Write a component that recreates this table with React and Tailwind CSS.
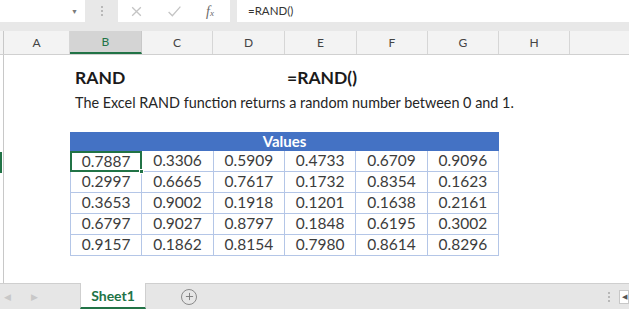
import React from 'react';
import { Plus } from 'lucide-react';

const cols = [
  { name: 'A', w: 'w-[66px]' },
  { name: 'B', w: 'w-[72px]', active: true },
  { name: 'C', w: 'w-[71px]' },
  { name: 'D', w: 'w-[72px]' },
  { name: 'E', w: 'w-[72px]' },
  { name: 'F', w: 'w-[71px]' },
  { name: 'G', w: 'w-[71px]' },
  { name: 'H', w: 'w-[71px]' },
];

const values = [
  ['0.7887', '0.3306', '0.5909', '0.4733', '0.6709', '0.9096'],
  ['0.2997', '0.6665', '0.7617', '0.1732', '0.8354', '0.1623'],
  ['0.3653', '0.9002', '0.1918', '0.1201', '0.1638', '0.2161'],
  ['0.6797', '0.9027', '0.8797', '0.1848', '0.6195', '0.3002'],
  ['0.9157', '0.1862', '0.8154', '0.7980', '0.8614', '0.8296'],
];

const App = () => {
  return (
    <div className="w-[629px] h-[309px] overflow-hidden bg-white flex flex-col font-['Lato','Liberation_Sans',sans-serif]">
      {/* formula bar */}
      <div className="h-[22px] flex bg-[#e8e8e8] shrink-0">
        <div className="w-[85px] bg-white flex items-center justify-end pr-[7px]">
          <span className="text-[#7a7a7a] text-[7px]">▼</span>
        </div>
        <div className="w-[33px] flex items-center justify-center">
          <div className="flex flex-col gap-[2px]">
            <span className="w-[2px] h-[2px] bg-[#b8b8b8]" />
            <span className="w-[2px] h-[2px] bg-[#b8b8b8]" />
            <span className="w-[2px] h-[2px] bg-[#b8b8b8]" />
          </div>
        </div>
        <div className="w-[112px] bg-white flex items-center">
          <svg width="13" height="13" viewBox="0 0 12 12" className="ml-[12px]">
            <path d="M2 2 L10 10 M10 2 L2 10" stroke="#c4c4c4" strokeWidth="1.2" />
          </svg>
          <svg width="15" height="13" viewBox="0 0 14 12" className="ml-[24px]">
            <path d="M1.5 6.5 L5 10 L12.5 1.5" stroke="#c4c4c4" strokeWidth="1.2" fill="none" />
          </svg>
          <span className="ml-[24px] text-[14px] italic text-[#6a6a6a] font-['Liberation_Serif',serif]">
            f<span className="text-[9px]">x</span>
          </span>
        </div>
        <div className="w-[7px]" />
        <div className="flex-1 bg-white flex items-center pl-[11px] text-[11.5px] text-[#333] leading-none">
          =RAND()
        </div>
      </div>
      <div className="h-[9px] bg-[#e8e8e8] shrink-0" />

      {/* column headers */}
      <div className="h-[24px] flex bg-[#f3f3f3] border-b border-[#d0d0d0] shrink-0">
        <div className="w-[4px] border-r border-[#c8c8c8]" />
        {cols.map((c) => (
          <div
            key={c.name}
            className={
              c.active
                ? `${c.w} flex items-center justify-center text-[12px] bg-[#d4d4d4] text-[#217346] border-b-2 border-[#217346] border-r border-r-[#c8c8c8]`
                : `${c.w} flex items-center justify-center text-[12px] text-[#444] border-r border-[#d6d6d6]`
            }
          >
            {c.name}
          </div>
        ))}
        <div className="flex-1" />
      </div>

      {/* sheet body */}
      <div className="flex-1 flex">
        <div className="w-[4px] border-r border-[#c8c8c8] flex flex-col">
          <div className="h-[97px]" />
          <div className="h-[21px] w-[2px] bg-[#217346]" />
        </div>
        <div className="flex-1 pl-[71px] pt-[13px]">
          <div className="flex h-[20px] items-center text-[17.5px] font-bold text-[#1a1a1a]">
            <span className="w-[212px]">RAND</span>
            <span>=RAND()</span>
          </div>
          <div className="h-[20px] mt-[5px] flex items-center text-[14.4px] text-[#262626]">
            The Excel RAND function returns a random number between 0 and 1.
          </div>
          <div className="ml-[-5px] mt-[19px] w-[429px]">
            <div className="h-[19px] bg-[#4472c4] text-white font-bold text-[15px] flex items-center justify-center">
              Values
            </div>
            <div className="grid grid-cols-6 border-l border-[#b4c6e7]">
              {values.map((row, ri) =>
                row.map((v, ci) => (
                  <div
                    key={`${ri}-${ci}`}
                    className={
                      ri === 0 && ci === 0
                        ? 'relative h-[21px] flex items-center justify-center text-[15.5px] text-[#3c3c3c] border-2 border-[#217346] -ml-px'
                        : 'h-[21px] flex items-center justify-center text-[15.5px] text-[#3c3c3c] border-r border-b border-[#b4c6e7]'
                    }
                  >
                    {v}
                    {ri === 0 && ci === 0 && (
                      <span className="absolute right-[-4px] bottom-[-4px] w-[5px] h-[5px] bg-[#217346] border border-white" />
                    )}
                  </div>
                ))
              )}
            </div>
          </div>
        </div>
      </div>

      {/* sheet tabs */}
      <div className="h-[26px] flex items-stretch bg-[#e6e6e6] border-t border-[#cfcfcf] shrink-0">
        <div className="w-[80px] flex items-center">
          <span className="ml-[4px] text-[9px] text-[#c8c8c8]">◀</span>
          <span className="ml-[20px] text-[9px] text-[#c8c8c8]">▶</span>
        </div>
        <div className="w-[66px] bg-white -mt-px flex items-center justify-center text-[14px] font-bold text-[#217346] border-b-2 border-[#217346] border-x border-x-[#cfcfcf]">
          Sheet1
        </div>
        <div className="w-[86px] flex items-center justify-center">
          <div className="w-[16px] h-[16px] rounded-full border border-[#8a8a8a] flex items-center justify-center">
            <Plus size={11} color="#7a7a7a" strokeWidth={2} />
          </div>
        </div>
        <div className="flex-1" />
        <div className="w-[12px] flex items-center justify-center">
          <div className="flex flex-col gap-[2px]">
            <span className="w-[2px] h-[2px] bg-[#b8b8b8]" />
            <span className="w-[2px] h-[2px] bg-[#b8b8b8]" />
            <span className="w-[2px] h-[2px] bg-[#b8b8b8]" />
          </div>
        </div>
        <div className="w-[14px] flex items-center justify-end">
          <div className="w-[10px] h-[14px] bg-white border border-[#c8c8c8] flex items-center justify-center text-[7px] text-[#555]">
            ◀
          </div>
        </div>
      </div>
    </div>
  );
};

export default App;
